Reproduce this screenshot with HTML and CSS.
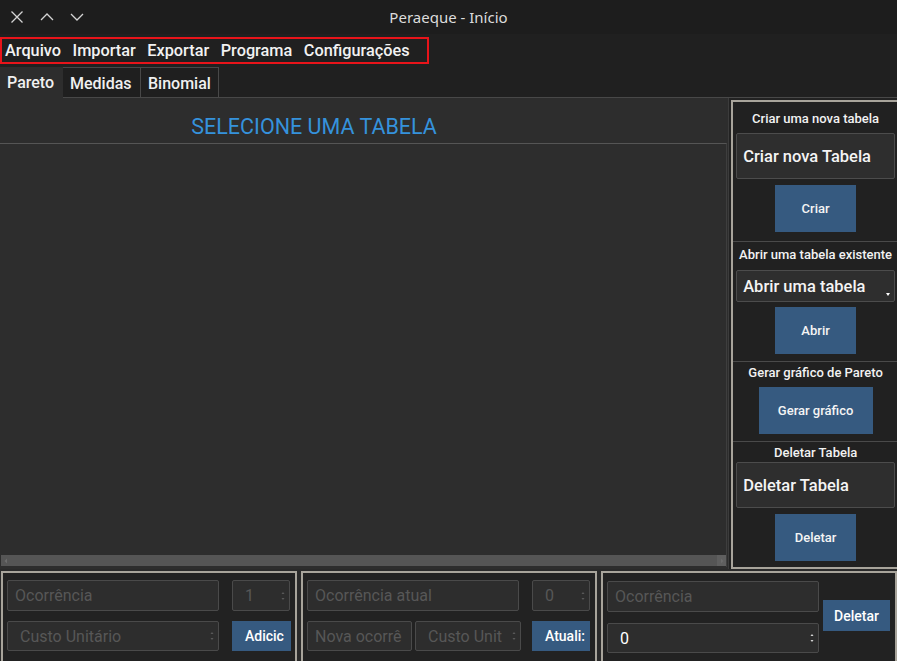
FILE: index.html
```html
<!DOCTYPE html>
<html lang="pt">
<head>
<meta charset="utf-8">
<title>Peraeque - Início</title>
<link rel="stylesheet" href="styles.css">
</head>
<body>
<div class="window">
  <header class="titlebar">
    <div class="wm-buttons">
      <svg class="wm" viewBox="0 0 14 14"><path d="M1.5 1.5 L12.5 12.5 M12.5 1.5 L1.5 12.5"/></svg>
      <svg class="wm" viewBox="0 0 14 14"><path d="M1 10 L7 4 L13 10"/></svg>
      <svg class="wm" viewBox="0 0 14 14"><path d="M1 4 L7 10 L13 4"/></svg>
    </div>
    <div class="title">Peraeque - Início</div>
  </header>

  <nav class="menubar">
    <div class="menu">
      <span class="menu-item">Arquivo</span>
      <span class="menu-item">Importar</span>
      <span class="menu-item">Exportar</span>
      <span class="menu-item">Programa</span>
      <span class="menu-item">Configurações</span>
    </div>
  </nav>

  <div class="tabs">
    <div class="tab active">Pareto</div>
    <div class="tab">Medidas</div>
    <div class="tab">Binomial</div>
    <div class="tab-rest"></div>
  </div>

  <main class="main">
    <section class="left">
      <h1 class="heading">SELECIONE UMA TABELA</h1>
      <div class="table">
        <div class="table-body"></div>
        <div class="hscroll">
          <span class="arrow-box left-arrow"><svg viewBox="0 0 4 6"><path d="M3 0.5 L0.5 3 L3 5.5Z"/></svg></span>
          <span class="track"></span>
          <span class="arrow-box right-arrow"><svg viewBox="0 0 4 6"><path d="M1 0.5 L3.5 3 L1 5.5Z"/></svg></span>
        </div>
      </div>
    </section>

    <aside class="side">
      <div class="label s1">Criar uma nova tabela</div>
      <div class="field big f1">Criar nova Tabela</div>
      <button class="btn b1">Criar</button>
      <hr class="divider d1">

      <div class="label s2">Abrir uma tabela existente</div>
      <div class="field combo f2">Abrir uma tabela<svg class="combo-arrow" viewBox="0 0 4 3"><path d="M0 0 H4 L2 3Z"/></svg></div>
      <button class="btn b2">Abrir</button>
      <hr class="divider d2">

      <div class="label s3">Gerar gráfico de Pareto</div>
      <button class="btn wide b3">Gerar gráfico</button>
      <hr class="divider d3">

      <div class="label s4">Deletar Tabela</div>
      <div class="field big f4">Deletar Tabela</div>
      <button class="btn b4">Deletar</button>
    </aside>
  </main>

  <footer class="bottom">
    <div class="group">
      <div class="row r1">
        <div class="input ph w212">Ocorrência</div>
        <div class="input ph spin w58 c">1<span class="spin-arrows"><svg viewBox="0 0 4 10"><path d="M2 1 L3.5 3 H0.5Z M2 9 L3.5 7 H0.5Z"/></svg></span></div>
      </div>
      <div class="row r2">
        <div class="input ph spin w212 ind">Custo Unitário<span class="spin-arrows"><svg viewBox="0 0 4 10"><path d="M2 1 L3.5 3 H0.5Z M2 9 L3.5 7 H0.5Z"/></svg></span></div>
        <button class="sbtn w59">Adicic</button>
      </div>
    </div>

    <div class="group">
      <div class="row r1">
        <div class="input ph w212">Ocorrência atual</div>
        <div class="input ph spin w58 c">0<span class="spin-arrows"><svg viewBox="0 0 4 10"><path d="M2 1 L3.5 3 H0.5Z M2 9 L3.5 7 H0.5Z"/></svg></span></div>
      </div>
      <div class="row r2">
        <div class="input ph w105 clip">Nova ocorrê</div>
        <div class="input ph spin w106 ind">Custo Unit<span class="spin-arrows"><svg viewBox="0 0 4 10"><path d="M2 1 L3.5 3 H0.5Z M2 9 L3.5 7 H0.5Z"/></svg></span></div>
        <button class="sbtn w58 gap8">Atuali:</button>
      </div>
    </div>

    <div class="group g3">
      <div class="col">
        <div class="input ph w212 h31">Ocorrência</div>
        <div class="input val spin w212 h30 ind">0<span class="spin-arrows light"><svg viewBox="0 0 4 10"><path d="M2 1 L3.5 3 H0.5Z M2 9 L3.5 7 H0.5Z"/></svg></span></div>
      </div>
      <button class="sbtn del">Deletar</button>
    </div>
  </footer>
</div>
</body>
</html>
```

FILE: styles.css
```css
* { box-sizing: border-box; }
html, body { margin: 0; padding: 0; }
body {
  width: 897px;
  height: 661px;
  overflow: hidden;
  background: #222222;
  font-family: Roboto, "Noto Sans", sans-serif;
  color: #f0f0f0;
}
.window { width: 897px; height: 661px; display: flex; flex-direction: column; }

/* title bar */
.titlebar {
  height: 34px;
  background: #1d1d1d;
  position: relative;
  display: flex;
  align-items: center;
}
.wm-buttons { display: flex; gap: 16px; padding-left: 10px; }
.wm { width: 14px; height: 14px; fill: none; stroke: #d4d4d4; stroke-width: 1.3; }
.title {
  position: absolute;
  left: 0; right: 0; top: 0;
  line-height: 34px;
  text-align: center;
  font-family: "Noto Sans", "Open Sans", sans-serif;
  font-size: 15px;
  color: #dcdcdc;
}

/* menubar */
.menubar {
  height: 33px;
  background: #202020;
  padding-top: 3px;
}
.menu {
  width: 429px;
  height: 27px;
  border: 2px solid #e8141a;
  display: flex;
  align-items: center;
  padding-left: 3px;
  gap: 11.5px;
}
.menu-item { font-size: 16.3px; font-weight: 500; color: #f2f2f2; }

/* tabs */
.tabs { height: 31px; display: flex; background: #202020; }
.tab {
  height: 31px;
  padding: 0 7px;
  line-height: 31px;
  font-size: 16px;
  font-weight: 500;
  color: #f0f0f0;
  border: 1px solid #484848;
  border-left: none;
  background: #1f1f1f;
  white-space: nowrap;
}
.tab.active { background: #2d2d2d; border: none; width: 63px; }
.tab:nth-child(2) { width: 78px; }
.tab:nth-child(3) { width: 78px; }
.tab-rest { flex: 1; border-bottom: 1px solid #484848; }

/* main */
.main { height: 471px; display: flex; }
.left {
  width: 730px;
  background: #2d2d2d;
  display: flex;
  flex-direction: column;
  border-right: 1px solid #3c3c3c;
}
.heading {
  margin: 0;
  height: 45px;
  padding-top: 17px;
  padding-right: 100px;
  text-align: center;
  font-size: 21.5px;
  font-weight: 400;
  line-height: 24px;
  color: #3592dc;
}
.table {
  height: 424px;
  margin-right: 1px;
  border-top: 1px solid #555555;
  border-right: 1px solid #3e3e3e;
  display: flex;
  flex-direction: column;
}
.table-body { flex: 1; }
.hscroll {
  height: 11px;
  display: flex;
  background: #555555;
  margin-left: 1px;
  margin-bottom: 1px;
}
.arrow-box { width: 9px; height: 11px; display: flex; align-items: center; justify-content: center; }
.arrow-box svg { width: 4px; height: 6px; fill: #6c6c6c; }
.right-arrow { background: #5f5f5f; }
.track { flex: 1; }

/* side panel */
.side {
  width: 166px;
  margin-left: 2px;
  margin-top: 2px;
  height: 469px;
  border: 2px solid #a8a49b;
  border-right: none;
  background: #212121;
  display: flex;
  flex-direction: column;
  align-items: center;
  padding: 0 2px 0 3px;
}
.label {
  font-size: 13px;
  font-weight: 500;
  line-height: 16px;
  color: #f2f2f2;
  text-align: center;
  white-space: nowrap;
}
.s1 { margin-top: 9px; }
.s2 { margin-top: 5px; }
.s3 { margin-top: 3px; }
.s4 { margin-top: 3px; }
.field {
  align-self: stretch;
  background: #2e2e2e;
  border: 1px solid #4c4c4c;
  border-radius: 2px;
  font-size: 16.5px;
  font-weight: 500;
  color: #f4f4f4;
  padding-left: 6px;
  display: flex;
  align-items: center;
  position: relative;
}
.big { height: 46px; }
.f1 { margin-top: 6px; }
.f4 { margin-top: 1px; }
.combo { height: 32px; margin-top: 7px; }
.combo-arrow { position: absolute; right: 4px; bottom: 5px; width: 4px; height: 3px; fill: #ffffff; }
.btn {
  width: 81px;
  height: 47px;
  border: none;
  background: #365a80;
  color: #f4f4f4;
  font-family: Roboto, sans-serif;
  font-size: 13px;
  font-weight: 500;
  padding: 0;
}
.btn.wide { width: 114px; }
.b1 { margin-top: 6px; }
.b2 { margin-top: 5px; }
.b3 { margin-top: 6px; }
.b4 { margin-top: 6px; }
.divider {
  align-self: stretch;
  margin: 0 -2px 0 -3px;
  border: none;
  border-top: 1px solid #4a4a4a;
  height: 0;
}
.d1 { margin-top: 9px; }
.d2 { margin-top: 7px; }
.d3 { margin-top: 7px; }

/* bottom */
.bottom {
  height: 92px;
  display: flex;
  gap: 4px;
  padding: 2px 0 0 1px;
  background: #2a2a2a;
}
.group {
  width: 296px;
  height: 92px;
  border: 2px solid #a8a49b;
  background: #222222;
  padding: 7px 0 0 4px;
  display: flex;
  flex-direction: column;
  gap: 10px;
}
.row { display: flex; gap: 13px; height: 31px; }
.row.r2 { height: 30px; gap: 3px; }
.row.r2 .sbtn { margin-left: 10px; }
.row.r2 .gap8 { margin-left: 8px; }
.input {
  height: 31px;
  background: #2d2d2d;
  border: 1px solid #4a4a4a;
  border-radius: 2px;
  font-size: 16px;
  padding-left: 7px;
  display: flex;
  align-items: center;
  position: relative;
  white-space: nowrap;
  overflow: hidden;
}
.r2 .input { height: 30px; }
.ph { color: #575757; }
.val { color: #ffffff; padding-left: 11px; }
.ind { padding-left: 12px; }
.c { justify-content: flex-start; padding-left: 12px; }
.clip { padding-left: 7px; }
.w212 { width: 212px; }
.w58 { width: 58px; }
.w59 { width: 59px; }
.w105 { width: 105px; }
.w106 { width: 106px; }
.h31 { height: 31px; }
.h30 { height: 30px; }
.spin-arrows {
  position: absolute;
  right: 4px;
  top: 50%;
  transform: translateY(-50%);
  display: flex;
}
.spin-arrows svg { width: 4px; height: 10px; fill: #5a5a5a; }
.spin-arrows.light svg { fill: #d8d8d8; }
.sbtn {
  height: 30px;
  border: none;
  background: #365a80;
  color: #ffffff;
  font-family: Roboto, sans-serif;
  font-size: 14px;
  font-weight: 500;
  padding: 0 0 0 13px;
  text-align: left;
  white-space: nowrap;
  overflow: hidden;
}
.g3 {
  flex-direction: row;
  align-items: flex-start;
  gap: 4px;
  padding-top: 8px;
}
.col { display: flex; flex-direction: column; gap: 11px; }
.sbtn.del {
  width: 67px;
  height: 31px;
  margin-top: 19px;
  padding: 0;
  text-align: center;
}
```
